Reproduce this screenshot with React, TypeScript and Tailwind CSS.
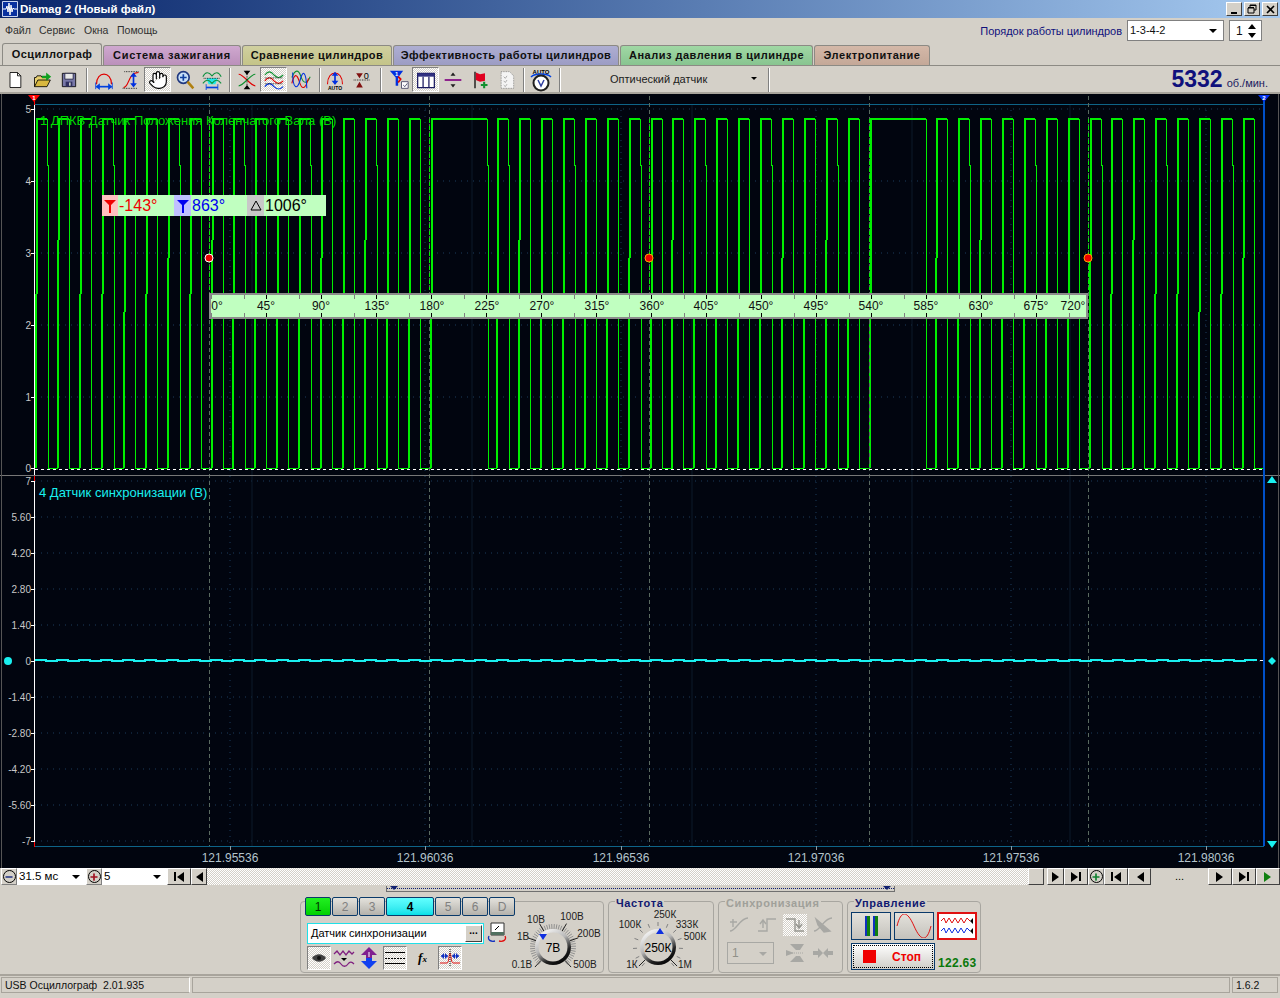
import React from 'react';
import { Hand, Minus, Plus } from 'lucide-react';

const GREEN = '#00f000';
const CYAN = '#19f0f0';

// tooth signal: rising edges every 21.95px, long tooth every 20 periods
const buildWave = () => {
    const steps = [294, 240, 294, 294, 312, 294, 258];
    let thick = '';
    let thin = '';
    for (let k = -18; k <= 37; k++) {
        const mod = ((k % 20) + 20) % 20;
        if (k > 0 && (mod === 1 || mod === 2)) continue;
        const long = k >= 0 && mod === 0;
        const rise = Math.round(431 + k * 21.95);
        const fall = long ? rise + 56 : rise + 11;
        const s = steps[(k + 18) % steps.length];
        thick += `M${rise} 468V${s}M${rise + 1} ${s}V119M${rise} 119H${fall}`;
        thin += `M${fall} 119V${k % 3 === 0 ? 165 : 458}H${fall + (k % 3 === 0 ? 1 : 0)}V468H${fall + 4}`;
        const next = long ? rise + 3 * 21.95 : rise + 21.95;
        thin += `M${fall + 4} 468H${Math.round(next)}`;
    }
    return { thick, thin };
};

const wave = buildWave();
const upperY = [['5', 109], ['4', 181], ['3', 253], ['2', 325], ['1', 397], ['0', 468]] as const;
const lowerY = [['7', 481], ['5.60', 517], ['4.20', 553], ['2.80', 589], ['1.40', 625], ['0', 661], ['-1.40', 697], ['-2.80', 733], ['-4.20', 769], ['-5.60', 805], ['-7', 841]] as const;
const timeLabels = [['121.95536', 230], ['121.96036', 425], ['121.96536', 621], ['121.97036', 816], ['121.97536', 1011], ['121.98036', 1206]] as const;
const cursors = [209, 429, 649, 869, 1088];
const degLabels = [['0°', 217], ['45°', 266], ['90°', 321], ['135°', 377], ['180°', 432], ['225°', 487], ['270°', 542], ['315°', 597], ['360°', 652], ['405°', 706], ['450°', 761], ['495°', 816], ['540°', 871], ['585°', 926], ['630°', 981], ['675°', 1036], ['720°', 1073]] as const;

let cyanLine = 'M35 661';
for (let x = 35; x < 1263; x += 11) cyanLine += `H${x}V${(x - 35) % 22 === 0 ? 660 : 661}`;

const rulerTicks: { x: number; major: boolean }[] = [];
for (let i = 0; i < 16; i++) {
    rulerTicks.push({ x: 55 * i, major: i > 0 });
    rulerTicks.push({ x: 55 * i + 33, major: false });
}

const Chart = () => (
    <svg width="1280" height="774" viewBox="0 94 1280 774" className="block" fontFamily="'Liberation Sans', sans-serif">
        <g stroke="#1c3d5c" strokeDasharray="1 5">
            {upperY.slice(0, 5).map(([, y]) => <path key={y} d={`M35 ${y}H1264`} />)}
            {lowerY.slice(0, 11).map(([, y]) => <path key={y} d={`M35 ${y}H1264`} />)}
            {timeLabels.map(([, x]) => <path key={x} d={`M${x} 104V846`} />)}
        </g>
        <g stroke="#0c1a2a">
            {[252, 472, 692, 912, 1070].map((x) => <path key={x} d={`M${x} 104V846`} />)}
        </g>
        <path d="M35 104.5H1264M35 846.5H1264" stroke="#0e6488" />
        <g shapeRendering="crispEdges" fill="none" stroke={GREEN}>
            <path d={wave.thick} strokeWidth="2" />
            <path d={wave.thin} />
        </g>
        <g stroke="#5a6a60" strokeDasharray="4 3">
            {cursors.map((x) => <path key={x} d={`M${x}.5 96V846`} />)}
        </g>
        <g stroke={GREEN} strokeDasharray="4 3">
            {cursors.map((x) => <path key={x} d={`M${x}.5 119V290`} />)}
        </g>
        <path d="M35 469.5H1263" stroke="#fff" strokeDasharray="3 3" />
        <path d="M35 660.5H1263" stroke="#fff" strokeDasharray="3 4" />
        <path d={cyanLine} stroke={CYAN} strokeWidth="2" fill="none" />
        <path d="M0 475.5H1280" stroke="#777" />
        <path d="M1.5 94V868" stroke="#555" />
        <path d="M1278.5 94V868" stroke="#555" />
        <path d="M34.5 105V475M34.5 481V846" stroke="#fff" />
        <path d="M34.5 98V105M34.5 476V481M34.5 842V847" stroke="#f00" />
        <path d="M1264 97V846" stroke="#0050c8" strokeWidth="2" />
        <path d="M28 95H40L34 102Z" fill="#f00" />
        <path d="M1258 95H1270L1264 102Z" fill="#0030f0" />
        <text x="34" y="100" fontSize="6" fontWeight="700" fill="#fff" textAnchor="middle">1</text>
        <text x="1264" y="100" fontSize="6" fontWeight="700" fill="#fff" textAnchor="middle">2</text>
        <g fontSize="10" fill="#c8c8c8" textAnchor="end">
            {upperY.map(([t, y]) => <text key={t} x="31" y={y + 4}>{t}</text>)}
            {lowerY.map(([t, y]) => <text key={t} x="31" y={y + 4}>{t}</text>)}
        </g>
        <g stroke="#fff">
            {upperY.map(([t, y]) => <path key={t} d={`M31 ${y}.5H34`} />)}
            {lowerY.map(([t, y]) => <path key={t} d={`M31 ${y}.5H34`} />)}
        </g>
        <text x="40" y="125" fontSize="13" fill="#00d800">1 ДПКВ Датчик Положения Коленчатого Вала (В)</text>
        <text x="39" y="497" fontSize="13" fill={CYAN}>4 Датчик синхронизации (В)</text>
        <g fontSize="12" fill="#b4c4cc" textAnchor="middle">
            {timeLabels.map(([t, x]) => <text key={t} x={x} y="862">{t}</text>)}
        </g>
        <g stroke="#8a9aa0">
            {timeLabels.map(([t, x]) => <path key={t} d={`M${x}.5 846V850`} />)}
        </g>
        {[209, 649, 1088].map((x) => (
            <circle key={x} cx={x} cy="258" r="4" fill="#f00000" stroke={x === 209 ? '#fff' : '#ffa000'} />
        ))}
        <circle cx="8" cy="661" r="4" fill={CYAN} />
        <path d="M1272 657L1276 661L1272 665L1268 661Z" fill={CYAN} />
        <path d="M1267 483L1272 476L1277 483Z" fill={CYAN} />
        <path d="M1267 841L1272 848L1277 841Z" fill={CYAN} />
    </svg>
);

const Funnel = ({ color }: { color: string }) => (
    <svg width="12" height="14" viewBox="0 0 12 14">
        <path d="M0 1H12L7 6V14H5V6Z" fill={color} />
    </svg>
);

const Readout = () => (
    <div className="absolute left-[102px] top-[101px] w-[224px] h-[21px] bg-[#c0ffc0] flex items-center text-[16px] leading-[21px]">
        <div className="w-[16px] h-full bg-[#ffc0c0] flex items-center justify-center flex-none"><Funnel color="#f00000" /></div>
        <div className="w-[56px] flex-none pl-[1px] text-[#f00000]">-143°</div>
        <div className="w-[17px] h-full bg-[#c0c0ff] flex items-center justify-center flex-none"><Funnel color="#0000f0" /></div>
        <div className="w-[56px] flex-none pl-[1px] text-[#0000f0]">863°</div>
        <div className="w-[17px] h-full bg-[#c8c8c8] flex items-center justify-center flex-none text-[12px] text-black">
            <svg width="12" height="11" viewBox="0 0 12 11"><path d="M6 1L11 10H1Z" fill="none" stroke="#000" /></svg>
        </div>
        <div className="pl-[1px] text-black">1006°</div>
    </div>
);

const Ruler = () => (
    <div className="absolute left-[209px] top-[199px] w-[879px] h-[26px] bg-[#c0ffc0] border-2 border-[#8c8c8c] text-[12px] text-[#101010]">
        {rulerTicks.map((t) => (
            <React.Fragment key={t.x}>
                <span className={`absolute top-0 w-px h-[4px] ${t.major ? 'bg-black' : 'bg-[#808080]'}`} style={{ left: t.x }} />
                <span className={`absolute bottom-0 w-px h-[4px] ${t.major ? 'bg-black' : 'bg-[#808080]'}`} style={{ left: t.x }} />
            </React.Fragment>
        ))}
        {degLabels.map(([t, x]) => (
            <span key={t} className="absolute top-[3px] leading-[16px] -translate-x-1/2" style={{ left: x - 211 }}>{t}</span>
        ))}
    </div>
);

const Ic = ({ children, size = 20 }: { children: React.ReactNode; size?: number }) => (
    <svg width={size} height={size} viewBox="0 0 24 24" fill="none">{children}</svg>
);

const dotted = 'repeating-conic-gradient(#ffffff 0 25%, #d4d0c8 0 50%) 0 0 / 2px 2px';

const TB = ({ children, pressed }: { children: React.ReactNode; pressed?: boolean }) => (
    <div
        className={`w-[27px] h-[25px] flex-none flex items-center justify-center ${pressed ? 'border border-t-[#808080] border-l-[#808080] border-r-white border-b-white' : ''}`}
        style={pressed ? { background: dotted } : undefined}
    >
        {children}
    </div>
);

const Sep = ({ className }: { className: string }) => (
    <div className={`w-[2px] h-[24px] flex-none border-l border-l-[#808080] border-r border-r-white ${className}`} />
);

const icons = {
    doc: <Ic><path d="M6 3H15L19 7V21H6Z" fill="#fff" stroke="#000" /><path d="M15 3V7H19" stroke="#000" /></Ic>,
    open: <Ic><path d="M3 20V9H5L6 7H11L12 9H18V12" fill="#e8d070" stroke="#000" /><path d="M3 20L7 12H22L18 20Z" fill="#d8b840" stroke="#000" /><path d="M12 7H17V3L23 8L17 13V10H12Z" fill="#10a020" /></Ic>,
    save: <Ic><path d="M4 4H20V20H4Z" fill="#7878a8" stroke="#000" /><path d="M7 4H17V11H7Z" fill="#e8e8e8" stroke="#202040" /><path d="M8 14H16V20H8Z" fill="#303060" /><path d="M12 15H14V19H12Z" fill="#c8c8c8" /></Ic>,
    arcH: <Ic><path d="M3 17C3 1 21 1 21 17" stroke="#e00000" strokeWidth="1.4" /><path d="M3 20H21" stroke="#0040e0" strokeWidth="2" /><path d="M2 20L7 16V24ZM22 20L17 16V24Z" fill="#0040e0" /><path d="M2 15V23M22 15V23" stroke="#0040e0" /></Ic>,
    arcV: <Ic><path d="M3 21C10 21 8 3 21 3" stroke="#e00000" strokeWidth="1.3" /><path d="M4 2H22M2 22H20" stroke="#000" strokeDasharray="1 1" /><path d="M15 6V18" stroke="#0030e0" strokeWidth="2" /><path d="M15 3L11 8H19ZM15 21L11 16H19Z" fill="#0030e0" /></Ic>,
    zoom: <Ic><circle cx="10" cy="9" r="7" fill="#c8e0f8" stroke="#203880" strokeWidth="2" /><path d="M6 9H14M10 5V13" stroke="#1040a0" strokeWidth="2" /><path d="M15 14L22 22" stroke="#b08010" strokeWidth="3" /></Ic>,
    cyanWave: <Ic><path d="M5 10H19L16 17H8Z" fill="#20e8e8" /><path d="M1 8C4 2 8 2 12 7C16 2 20 2 23 8M1 16C5 11 8 11 12 16C16 11 19 11 23 16" stroke="#109040" strokeWidth="1.3" /><path d="M5 21H19" stroke="#0040e0" strokeWidth="2" /><path d="M5 17V24M19 17V24" stroke="#0040e0" /><path d="M2 10H22" stroke="#000" strokeDasharray="1 1" /></Ic>,
    cross: <Ic><path d="M2 5C8 5 16 19 22 19" stroke="#e00000" strokeWidth="1.3" /><path d="M2 19C8 19 16 5 22 5" stroke="#109030" strokeWidth="1.3" /><path d="M12 1V23" stroke="#000" strokeDasharray="1 1" /><path d="M8 1H16L12 6ZM8 23H16L12 18Z" fill="#000" /></Ic>,
    stacked: <Ic><path d="M1 6C5 1 8 1 12 6C16 10 19 10 23 6" stroke="#109030" strokeWidth="1.4" /><path d="M1 13C5 8 8 8 12 13C16 17 19 17 23 13" stroke="#e00000" strokeWidth="1.4" /><path d="M1 20C5 15 8 15 12 20C16 24 19 24 23 20" stroke="#0030e0" strokeWidth="1.4" /><path d="M1 9.5H23M1 16.5H23" stroke="#000" strokeDasharray="1 1" /></Ic>,
    overlap: <Ic><path d="M1 9C5 -1 9 -1 12 8C15 17 19 17 23 8" stroke="#109030" strokeWidth="1.3" /><path d="M1 16C4 4 7 4 10 14C13 24 17 24 21 10" stroke="#e00000" strokeWidth="1.3" /><path d="M2 3C2 24 8 24 11 12C14 0 18 0 19 22" stroke="#0030e0" strokeWidth="1.3" /></Ic>,
    arcAuto: <Ic><path d="M3 17C3 -1 21 -1 21 17" stroke="#e00000" strokeWidth="1.3" /><path d="M12 5V15" stroke="#0030e0" strokeWidth="2" /><path d="M12 2L8 7H16ZM12 18L8 13H16Z" fill="#0030e0" /><text x="12" y="23.5" fontSize="6" fontWeight="700" fill="#000" textAnchor="middle" fontFamily="'Liberation Sans', sans-serif">AUTO</text></Ic>,
    zero: <Ic><path d="M2 12H22" stroke="#000" strokeDasharray="1 1" /><path d="M5 4H13L9 10ZM5 21H13L9 14Z" fill="#801010" /><text x="14" y="11" fontSize="11" fill="#000" fontFamily="'Liberation Sans', sans-serif">0</text></Ic>,
    filter: <Ic><path d="M1 1H17L11 9V19H8V9Z" fill="#0030e0" /><text x="9" y="7" fontSize="7" fontWeight="700" fill="#fff" textAnchor="middle" fontFamily="'Liberation Sans', sans-serif">1</text><path d="M11 8L14 11L11 15" stroke="#e00000" strokeWidth="2" /><path d="M15 14H23V22H15Z" fill="#fff" stroke="#404060" /><path d="M17 18L19 20L22 16" stroke="#404060" /></Ic>,
    table: <Ic><path d="M2 4H22V21H2Z" fill="#fff" stroke="#1a1a60" strokeWidth="1.5" /><path d="M2 4H22V8H2Z" fill="#303080" /><path d="M8.5 8V21M15.5 8V21" stroke="#1a1a60" strokeWidth="1.5" /></Ic>,
    divide: <Ic><path d="M2 12H22" stroke="#800080" strokeWidth="2" /><path d="M9 7H15L12 3ZM9 17H15L12 21Z" fill="#202020" /></Ic>,
    flag: <Ic><path d="M6 2V22" stroke="#000" strokeWidth="1.5" /><path d="M7 3L12 5L18 4V13L12 14L7 12Z" fill="#e00020" /><path d="M13 18H21M17 14V22" stroke="#109030" strokeWidth="2.5" /></Ic>,
    sheet: <Ic><path d="M5 2H15L20 7V22H5Z" fill="#f4f4f4" stroke="#808080" strokeDasharray="1 1" /><path d="M8 8L10 10L12 7M8 13L10 15L12 12M8 18L10 20L12 17" stroke="#a0a0a0" /></Ic>,
    autoClock: <Ic size={24}><text x="12" y="5.5" fontSize="6" fontWeight="700" fill="#000" textAnchor="middle" fontFamily="'Liberation Sans', sans-serif">AUTO</text><path d="M2 9C6 5 18 5 22 9" stroke="#0040e0" strokeWidth="1.5" /><circle cx="12" cy="15" r="7.5" fill="#fff" stroke="#202020" strokeWidth="2" /><path d="M9 12L12 18L15 12" stroke="#3040a0" strokeWidth="1.5" /></Ic>,
};

const Tab = ({ label, bg, w, track, active }: { label: string; bg: string; w: string; track: string; active?: boolean }) => (
    <div className={`flex-none rounded-t-[3px] border border-[#8c8a84] border-b-0 flex items-center justify-center font-bold text-[11px] text-[#101010] ${track} ${bg} ${w} ${active ? 'h-[22px]' : 'h-[20px]'}`}>
        {label}
    </div>
);

const Tabs = () => (
    <div className="h-[22px] pl-[2px] flex items-end gap-[1px]">
        <Tab active label="Осциллограф" track="tracking-[0.45px]" w="w-[100px]" bg="bg-[#d4d0c8]" />
        <Tab label="Система зажигания" track="tracking-[0.7px]" w="w-[138px]" bg="bg-gradient-to-b from-[#cfa8cf] to-[#bb90bb]" />
        <Tab label="Сравнение цилиндров" track="tracking-[0.45px]" w="w-[150px]" bg="bg-gradient-to-b from-[#d0d0a0] to-[#c4c488]" />
        <Tab label="Эффективность работы цилиндров" track="tracking-[0.45px]" w="w-[226px]" bg="bg-gradient-to-b from-[#aeaed2] to-[#9c9cc4]" />
        <Tab label="Анализ давления в цилиндре" track="tracking-[0.5px]" w="w-[193px]" bg="bg-gradient-to-b from-[#a0d8a4] to-[#88c490]" />
        <Tab label="Электропитание" track="tracking-[0.55px]" w="w-[116px]" bg="bg-gradient-to-b from-[#d4b8a8] to-[#c4a898]" />
    </div>
);

const Toolbar = () => (
    <div className="h-[29px] pt-[1px] border-t border-t-[#8c8a84] border-b-2 border-b-[#a8a49c] flex items-center text-[10.5px] text-[#202020]">
        <div className="ml-[1px] flex">
            <TB>{icons.doc}</TB><TB>{icons.open}</TB><TB>{icons.save}</TB>
        </div>
        <Sep className="ml-[4px]" />
        <div className="ml-[2px] flex">
            <TB>{icons.arcH}</TB><TB>{icons.arcV}</TB>
            <TB pressed><Hand size={20} color="#000" fill="#fff" strokeWidth={1.4} /></TB>
            <TB>{icons.zoom}</TB><TB>{icons.cyanWave}</TB>
        </div>
        <Sep className="ml-[4px]" />
        <div className="ml-[2px] flex">
            <TB>{icons.cross}</TB><TB pressed>{icons.stacked}</TB><TB>{icons.overlap}</TB>
        </div>
        <Sep className="ml-[5px]" />
        <div className="flex">
            <TB>{icons.arcAuto}</TB><TB>{icons.zero}</TB>
        </div>
        <Sep className="ml-[5px]" />
        <div className="ml-[3px] flex">
            <TB>{icons.filter}</TB><TB pressed>{icons.table}</TB><TB>{icons.divide}</TB><TB>{icons.flag}</TB><TB>{icons.sheet}</TB>
        </div>
        <Sep className="ml-[3px]" />
        <div className="ml-[2px] flex"><TB>{icons.autoClock}</TB></div>
        <Sep className="ml-[5px]" />
        <div className="w-[207px] flex-none relative pl-[49px] text-[11px]">
            Оптический датчик
            <span className="absolute right-[11px] top-[6px] border-x-[3px] border-x-transparent border-t-[3px] border-t-black" />
        </div>
        <Sep className="" />
        <div className="flex-1 flex justify-end items-baseline pr-[12px] text-[#101080]">
            <span className="text-[23px] leading-[24px] font-bold text-[#10107c]">5332</span>
            <span className="ml-[4px] text-[11px] text-[#202060]">об./мин.</span>
        </div>
    </div>
);

const WinBtn = ({ children }: { children: React.ReactNode }) => (
    <div className="w-[16px] h-[14px] bg-[#d4d0c8] border border-t-white border-l-white border-r-[#404040] border-b-[#404040] flex items-center justify-center">
        {children}
    </div>
);

const TitleBar = () => (
    <div className="h-[18px] pl-[2px] pr-[2px] flex items-center bg-gradient-to-r from-[#0a246a] to-[#a6caf0]">
        <svg width="16" height="16" viewBox="0 0 16 16">
            <path d="M0.5 0.5H15.5V15.5H0.5Z" fill="#0830a0" stroke="#c8d4f0" />
            <path d="M1 8H4L5 5L6 11L7 2L8 14L9 4L10 11L11 7L12 8H15" stroke="#fff" fill="none" />
        </svg>
        <span className="ml-[2px] mt-[1px] font-bold text-[11.5px] text-white">Diamag 2 (Новый файл)</span>
        <div className="ml-auto flex gap-[2px]">
            <WinBtn><span className="w-[6px] h-[2px] bg-black mt-[7px]" /></WinBtn>
            <WinBtn>
                <svg width="10" height="10" viewBox="0 0 10 10" fill="none" stroke="#000"><path d="M3 3V1H9V6H7M1 4H7V9H1ZM1 3.5H7M3 1.5H9" /></svg>
            </WinBtn>
            <WinBtn>
                <svg width="9" height="9" viewBox="0 0 9 9" stroke="#000" strokeWidth="1.6"><path d="M1 1L8 8M8 1L1 8" /></svg>
            </WinBtn>
        </div>
    </div>
);

const MenuBar = () => (
    <div className="h-[25px] pl-[5px] pr-[18px] flex items-center text-[10.5px] text-[#303030]">
        <span className="w-[34px] mt-[1px]">Файл</span>
        <span className="w-[45px] mt-[1px]">Сервис</span>
        <span className="w-[33px] mt-[1px]">Окна</span>
        <span className="mt-[1px]">Помощь</span>
        <span className="ml-auto mt-[1px] text-[11px] tracking-[-0.03px] text-[#10107c]">Порядок работы цилиндров</span>
        <div className="ml-[5px] w-[97px] h-[21px] bg-white border border-[#808080] pl-[2px] flex items-center relative text-[11px] text-[#101010]">
            1-3-4-2
            <span className="absolute right-[6px] top-[8px] border-x-[4px] border-x-transparent border-t-[4px] border-t-black" />
        </div>
        <div className="ml-[5px] w-[33px] h-[21px] bg-white border border-[#808080] pl-[6px] flex items-center relative text-[12px] text-[#101010]">
            1
            <span className="absolute right-[5px] top-[3px] border-x-[4px] border-x-transparent border-b-[5px] border-b-black" />
            <span className="absolute right-[5px] bottom-[2px] border-x-[4px] border-x-transparent border-t-[5px] border-t-black" />
        </div>
    </div>
);

const Tri = ({ dir, color = '#000' }: { dir: 'l' | 'r'; color?: string }) => (
    <svg width="8" height="10" viewBox="0 0 8 10"><path d={dir === 'l' ? 'M8 0V10L1 5Z' : 'M0 0V10L7 5Z'} fill={color} /></svg>
);

const NavBtn = ({ w, children }: { w: string; children?: React.ReactNode }) => (
    <div className={`${w} h-[17px] flex-none bg-[#d4d0c8] border border-t-white border-l-white border-r-[#404040] border-b-[#404040] flex items-center justify-center`}>
        {children}
    </div>
);

const Zoom = ({ plus, green }: { plus?: boolean; green?: boolean }) => (
    <div className="w-[16px] h-[17px] flex-none flex items-center justify-center bg-[#d4d0c8] border border-t-white border-l-white border-r-[#808080] border-b-[#808080]">
        <div className="w-[13px] h-[13px] rounded-full border border-black flex items-center justify-center">
            {plus ? <Plus size={10} strokeWidth={4} color={green ? '#108030' : '#a01020'} /> : <Minus size={10} strokeWidth={4} color="#203080" />}
        </div>
    </div>
);

const Combo = ({ w, text }: { w: string; text: string }) => (
    <div className={`${w} h-[17px] flex-none bg-white pl-[2px] flex items-center relative text-[11.5px] text-black`}>
        {text}
        <span className="absolute right-[6px] top-[7px] border-x-[4px] border-x-transparent border-t-[4px] border-t-black" />
    </div>
);

const ScrollRow = () => (
    <div className="h-[18px] pl-[1px] flex items-start">
        <Zoom />
        <Combo w="w-[69px]" text="31.5 мс" />
        <Zoom plus />
        <Combo w="w-[65px]" text="5" />
        <NavBtn w="w-[24px]"><span className="w-[2px] h-[9px] bg-black" /><Tri dir="l" /></NavBtn>
        <NavBtn w="w-[16px]"><Tri dir="l" /></NavBtn>
        <div className="flex-1 h-[17px] flex justify-end" style={{ background: dotted }}>
            <NavBtn w="w-[16px]" />
        </div>
        <div className="w-[3px] h-[17px] flex-none" />
        <NavBtn w="w-[17px]"><Tri dir="r" /></NavBtn>
        <NavBtn w="w-[24px]"><Tri dir="r" /><span className="w-[2px] h-[9px] bg-black" /></NavBtn>
        <Zoom plus green />
        <NavBtn w="w-[24px]"><span className="w-[2px] h-[9px] bg-black" /><Tri dir="l" /></NavBtn>
        <NavBtn w="w-[23px]"><Tri dir="l" /></NavBtn>
        <div className="w-[57px] flex-none h-[17px] text-center text-[11px] leading-[16px] text-black">...</div>
        <NavBtn w="w-[24px]"><Tri dir="r" /></NavBtn>
        <NavBtn w="w-[24px]"><Tri dir="r" /><span className="w-[2px] h-[9px] bg-black" /></NavBtn>
        <NavBtn w="w-[24px]"><Tri dir="r" color="#108010" /></NavBtn>
    </div>
);

const MiniBar = () => (
    <div className="h-[6px] ml-[386px] w-[509px] flex items-center bg-[#d4d0c8] border border-[#707070] border-t-0 relative">
        <div className="w-full border-t border-dotted border-t-[#102070]" />
        <span className="absolute left-[3px] top-0 border-x-[4px] border-x-transparent border-t-[4px] border-t-[#102070]" />
        <span className="absolute right-[3px] top-0 border-x-[4px] border-x-transparent border-t-[4px] border-t-[#102070]" />
    </div>
);

const ChBtn = ({ label, w = 'w-[26px]', kind }: { label: string; w?: string; kind?: 'green' | 'cyan' }) => (
    <div className={`${w} h-[19px] flex-none rounded-[2px] border border-[#0a3a6a] flex items-center justify-center text-[12px] ${
        kind === 'green' ? 'bg-gradient-to-b from-[#20f020] to-[#00d000] text-[#003000]'
            : kind === 'cyan' ? 'bg-gradient-to-b from-[#60ffff] to-[#00e0e8] text-black font-bold'
                : 'bg-gradient-to-b from-[#e4e2dc] to-[#b4b2ac] text-[#808080]'}`}>
        {label}
    </div>
);

const ChIcon = ({ children, pressed }: { children: React.ReactNode; pressed?: boolean }) => (
    <div
        className={`w-[24px] h-[24px] flex-none flex items-center justify-center ${pressed ? 'border border-t-[#808080] border-l-[#808080] border-r-white border-b-white' : ''}`}
        style={pressed ? { background: dotted } : undefined}
    >
        {children}
    </div>
);

const Knob = ({ value, labels, w, cx, cy, sparse, ptr, majors }: {
    value: string; labels: readonly (readonly [string, number, number])[]; w: number; cx: number; cy: number;
    sparse?: boolean; ptr: string; majors: readonly number[];
}) => {
    const ticks = sparse ? 13 : 44;
    const marks = [];
    for (let i = 0; i < ticks; i++) {
        const a = ((-140 + (280 * i) / (ticks - 1)) * Math.PI) / 180;
        const r1 = sparse ? 21 : 18;
        const r2 = sparse ? 25 : 23;
        marks.push(
            <path key={i} d={`M${cx + r1 * Math.sin(a)} ${cy - r1 * Math.cos(a)}L${cx + r2 * Math.sin(a)} ${cy - r2 * Math.cos(a)}`} stroke={sparse ? '#808080' : '#909090'} />
        );
    }
    const bigMarks = majors.map((deg) => {
        const a = (deg * Math.PI) / 180;
        return <path key={deg} d={`M${cx + 18 * Math.sin(a)} ${cy - 18 * Math.cos(a)}L${cx + 27 * Math.sin(a)} ${cy - 27 * Math.cos(a)}`} stroke="#202020" />;
    });
    return (
        <svg width={w} height="70" viewBox={`0 0 ${w} 70`} className="flex-none" fontFamily="'Liberation Sans', sans-serif">
            <defs>
                <linearGradient id={`k${w}`} x1="0.15" y1="0" x2="0.75" y2="1">
                    <stop offset="0" stopColor="#ffffff" />
                    <stop offset="0.45" stopColor="#b8b8b8" />
                    <stop offset="0.75" stopColor="#202020" />
                    <stop offset="1" stopColor="#000000" />
                </linearGradient>
            </defs>
            {marks}
            {bigMarks}
            <circle cx={cx} cy={cy} r="18" fill={`url(#k${w})`} />
            <circle cx={cx} cy={cy} r="14.5" fill="#d4d0c8" />
            <text x={cx} y={cy + 4.5} fontSize="12" fill="#000" textAnchor="middle">{value}</text>
            <path d={ptr} fill="#1030e0" />
            <g fontSize="10" fill="#202020" textAnchor="middle">
                {labels.map(([t, x, y]) => <text key={t} x={x} y={y}>{t}</text>)}
            </g>
        </svg>
    );
};

const vLabels = [['10В', 27, 21], ['100В', 63, 18], ['200В', 80, 35], ['1В', 14, 38], ['0.1В', 13, 66], ['500В', 76, 66]] as const;
const fLabels = [['250К', 56, 16], ['100К', 21, 26], ['333К', 78, 26], ['500К', 86, 38], ['1К', 23, 66], ['1М', 76, 66]] as const;

const GroupTitle = ({ text, muted }: { text: string; muted?: boolean }) => (
    <span className={`absolute left-[6px] -top-[5px] px-[1px] leading-[12px] bg-[#d4d0c8] font-bold text-[11px] tracking-[0.6px] ${muted ? 'text-[#a0a09a]' : 'text-[#101870]'}`}>
        {text}
    </span>
);

const SyncIc = ({ children, pressed }: { children: React.ReactNode; pressed?: boolean }) => (
    <div className="w-[24px] h-[22px] flex-none flex items-center justify-center" style={pressed ? { background: dotted } : undefined}>
        {children}
    </div>
);

const ChannelGroup = () => (
    <div className="w-[304px] h-[72px] flex-none rounded-[4px] border border-[#a8a6a0] flex">
        <div className="w-[208px] flex-none pl-[4px] -mt-[5px]">
            <div className="flex gap-[1px]">
                <ChBtn label="1" kind="green" />
                <ChBtn label="2" />
                <ChBtn label="3" />
                <ChBtn label="4" w="w-[48px]" kind="cyan" />
                <ChBtn label="5" />
                <ChBtn label="6" />
                <ChBtn label="D" />
            </div>
            <div className="mt-[6px] flex items-center">
                <div className="ml-[2px] w-[177px] h-[21px] bg-white border border-[#20e0e8] pl-[3px] pr-[1px] flex items-center justify-between text-[11px] text-black">
                    Датчик синхронизации
                    <div className="w-[17px] h-[17px] bg-[#d4d0c8] border border-t-white border-l-white border-r-[#404040] border-b-[#404040] text-[10px] leading-[10px] text-center font-bold">...</div>
                </div>
                <svg width="20" height="22" viewBox="0 0 20 22" className="ml-[3px]" fill="none">
                    <path d="M4 1H17V13H4Z" fill="#fff" stroke="#303030" />
                    <path d="M4 10H17V13H4Z" fill="#507060" />
                    <path d="M8 8L12 4" stroke="#000" />
                    <path d="M2 14C0 18 4 20 8 19" stroke="#1030c0" strokeWidth="1.3" />
                    <path d="M18 14C20 18 16 20 12 19" stroke="#e01010" strokeWidth="1.3" />
                </svg>
            </div>
            <div className="mt-[2px] ml-[2px] flex items-center gap-[1px]">
                <ChIcon pressed>
                    <svg width="16" height="10" viewBox="0 0 16 10"><path d="M1 5C5 0 11 0 15 5C11 10 5 10 1 5Z" fill="#404040" /><circle cx="8" cy="5" r="2" fill="#101010" /></svg>
                </ChIcon>
                <ChIcon>
                    <svg width="22" height="20" viewBox="0 0 22 20" fill="none" stroke="#802080" strokeWidth="1.3"><path d="M1 6L4 3L7 7L10 3L13 7L16 3L19 6L21 4" /><path d="M1 16C4 13 6 13 8 16C10 19 13 19 15 16C17 13 19 14 21 16" /><path d="M8 10H14L11 13Z" fill="#000" stroke="none" /></svg>
                </ChIcon>
                <ChIcon>
                    <svg width="18" height="22" viewBox="0 0 18 22"><path d="M9 0L17 8H12V11H6V8H1Z" fill="#802090" /><path d="M9 22L17 14H12V11H6V14H1Z" fill="#1040f0" /><path d="M9 5V10" stroke="#fff" /></svg>
                </ChIcon>
                <div className="ml-[1px]">
                    <ChIcon pressed>
                        <svg width="20" height="16" viewBox="0 0 20 16" stroke="#000"><path d="M0 2.5H20M0 13.5H20" /><path d="M0 8.5H20" strokeDasharray="2 1" /></svg>
                    </ChIcon>
                </div>
                <div className="w-[29px] flex-none text-center font-['Liberation_Serif'] italic font-bold text-[13px] text-black">f<span className="text-[9px]">x</span></div>
                <ChIcon pressed>
                    <svg width="20" height="20" viewBox="0 0 20 20" fill="none"><path d="M0 15H7C9 15 9 5 10 5C11 5 11 15 13 15H20" stroke="#e01010" /><path d="M1 8H8M12 8H19" stroke="#1030c0" /><path d="M1 8L4 5V11ZM8 8L5 5V11ZM12 8L15 5V11ZM19 8L16 5V11Z" fill="#1030c0" /><path d="M10 1V19" stroke="#000" strokeDasharray="1 1" /></svg>
                </ChIcon>
            </div>
        </div>
        <Knob value="7В" labels={vLabels} w={94} cx={44} cy={45} ptr="M30 32H38L34 38Z" majors={[-138, -70, -30, 30, 70, 138]} />
    </div>
);

const FreqGroup = () => (
    <div className="relative w-[106px] h-[72px] flex-none rounded-[4px] border border-[#a8a6a0]">
        <GroupTitle text="Частота" />
        <Knob value="250К" labels={fLabels} w={104} cx={49} cy={45} sparse ptr="M47 32H55L51 26Z" majors={[-135, 135]} />
    </div>
);

const SyncGroup = () => (
    <div className="relative w-[125px] h-[72px] flex-none rounded-[4px] border border-[#a8a6a0]">
        <GroupTitle text="Синхронизация" muted />
        <div className="pl-[8px] pt-[12px] grid grid-cols-[28px_28px_28px_28px] gap-y-[6px]">
            <SyncIc><svg width="20" height="18" viewBox="0 0 20 18" fill="none" stroke="#a8a8a4" strokeWidth="1.4"><path d="M1 15C7 15 11 2 19 2" /><path d="M1 6H8M4 3V11" /></svg></SyncIc>
            <SyncIc><svg width="20" height="18" viewBox="0 0 20 18" fill="none" stroke="#a8a8a4" strokeWidth="1.4"><path d="M1 15H10V3H19" /><path d="M6 12V5M3 8L6 4L9 8" /></svg></SyncIc>
            <SyncIc pressed><svg width="20" height="18" viewBox="0 0 20 18" fill="none" stroke="#969690" strokeWidth="1.4"><path d="M1 3H10V15H19" /><path d="M14 4V11M11 8L14 12L17 8" /></svg></SyncIc>
            <SyncIc><svg width="20" height="18" viewBox="0 0 20 18" fill="none" stroke="#a8a8a4" strokeWidth="1.4"><path d="M1 15C7 15 11 2 19 2" /><path d="M3 3L17 15L11 16L5 9Z" fill="#a8a8a4" /></svg></SyncIc>
            <div className="col-span-2 w-[47px] h-[22px] border border-[#a8a8a4] pl-[4px] flex items-center relative text-[12px] text-[#909088]">
                1
                <span className="absolute right-[6px] top-[9px] border-x-[4px] border-x-transparent border-t-[4px] border-t-[#a8a8a4]" />
            </div>
            <SyncIc><svg width="20" height="18" viewBox="0 0 20 18" fill="#a8a8a4"><path d="M5 0H19L15 6H11ZM5 18H19L15 12H11Z" /><path d="M1 6V12L9 9Z" /><path d="M1 9H19" stroke="#a8a8a4" strokeDasharray="1 1" /></svg></SyncIc>
            <SyncIc><svg width="20" height="10" viewBox="0 0 20 10" fill="#a8a8a4"><path d="M0 3H5V0L10 5L5 10V7H0ZM20 3H15V0L10 5L15 10V7H20Z" /></svg></SyncIc>
        </div>
    </div>
);

const CtlBtn = ({ children }: { children: React.ReactNode }) => (
    <div className="w-[40px] h-[28px] flex-none border border-[#0a3a6a] bg-gradient-to-b from-[#e4e2dc] to-[#c4c2bc] flex items-center justify-center">
        {children}
    </div>
);

const ControlGroup = () => (
    <div className="relative w-[134px] h-[72px] flex-none rounded-[4px] border border-[#a8a6a0]">
        <GroupTitle text="Управление" />
        <div className="pl-[3px] pt-[10px] flex gap-[3px]">
            <CtlBtn>
                <span className="w-[5px] h-[20px] bg-[#108010] border-l-2 border-l-[#1030c0]" />
                <span className="ml-[3px] w-[5px] h-[20px] bg-[#108010] border-l-2 border-l-[#1030c0]" />
            </CtlBtn>
            <CtlBtn>
                <svg width="36" height="24" viewBox="0 0 36 24" fill="none" stroke="#e01010"><path d="M1 12C5 -4 11 -4 18 12C25 28 31 28 35 12" /></svg>
            </CtlBtn>
            <div className="w-[40px] h-[28px] flex-none border-2 border-[#e01010] bg-white flex items-center justify-center">
                <svg width="34" height="22" viewBox="0 0 34 22" fill="none"><path d="M1 6L4 3L6 8L9 3L12 8L15 3L18 8L21 3L24 8L27 3L30 6" stroke="#e01010" /><path d="M1 16L4 13L6 18L9 13L12 18L15 13L18 18L21 13L24 18L27 13L30 16" stroke="#1030e0" /><path d="M33 3V9L30 6ZM33 13V19L30 16Z" fill="#000" /></svg>
            </div>
        </div>
        <div className="pl-[3px] mt-[3px] flex items-end">
            <div className="w-[84px] h-[27px] flex-none border border-[#0a3a6a] bg-gradient-to-b from-white to-[#d0cec8] flex items-center p-[1px]">
                <div className="w-full h-full border border-dotted border-black flex items-center pl-[9px]">
                    <span className="w-[13px] h-[13px] bg-[#f00000] flex-none" />
                    <span className="ml-[16px] font-bold text-[12px] text-[#f00000]">Стоп</span>
                </div>
            </div>
            <span className="ml-[3px] font-bold text-[12px] leading-[14px] tracking-[0.3px] text-[#0a780a]">122.63</span>
        </div>
    </div>
);

const Controls = () => (
    <div className="h-[82px] pl-[300px] pt-[9px] flex gap-[4px]">
        <ChannelGroup />
        <FreqGroup />
        <SyncGroup />
        <ControlGroup />
    </div>
);

const StatusBar = () => (
    <div className="h-[24px] border-t-2 border-t-[#a8a49c] pt-[1px] pl-[1px] pr-[2px] flex gap-[2px] text-[10.5px] text-[#101010]">
        <div className="w-[189px] h-[16px] flex-none border border-[#a8a49c] border-r-white pl-[3px] leading-[15px]">
            USB Осциллограф <span className="ml-[3px]">2.01.935</span>
        </div>
        <div className="flex-1 h-[16px] border border-[#a8a49c]" />
        <div className="w-[46px] h-[16px] flex-none border border-[#a8a49c] pl-[3px] leading-[15px]">1.6.2</div>
    </div>
);

const App = () => {
    return (
        <div className="w-[1280px] h-[998px] overflow-hidden bg-[#d4d0c8] font-['Liberation_Sans',sans-serif] flex flex-col">
            <TitleBar />
            <MenuBar />
            <Tabs />
            <Toolbar />
            <div className="relative h-[774px] bg-[#01050f] flex-none">
                <Chart />
                <Readout />
                <Ruler />
            </div>
            <ScrollRow />
            <MiniBar />
            <Controls />
            <StatusBar />
        </div>
    );
};

export default App;
